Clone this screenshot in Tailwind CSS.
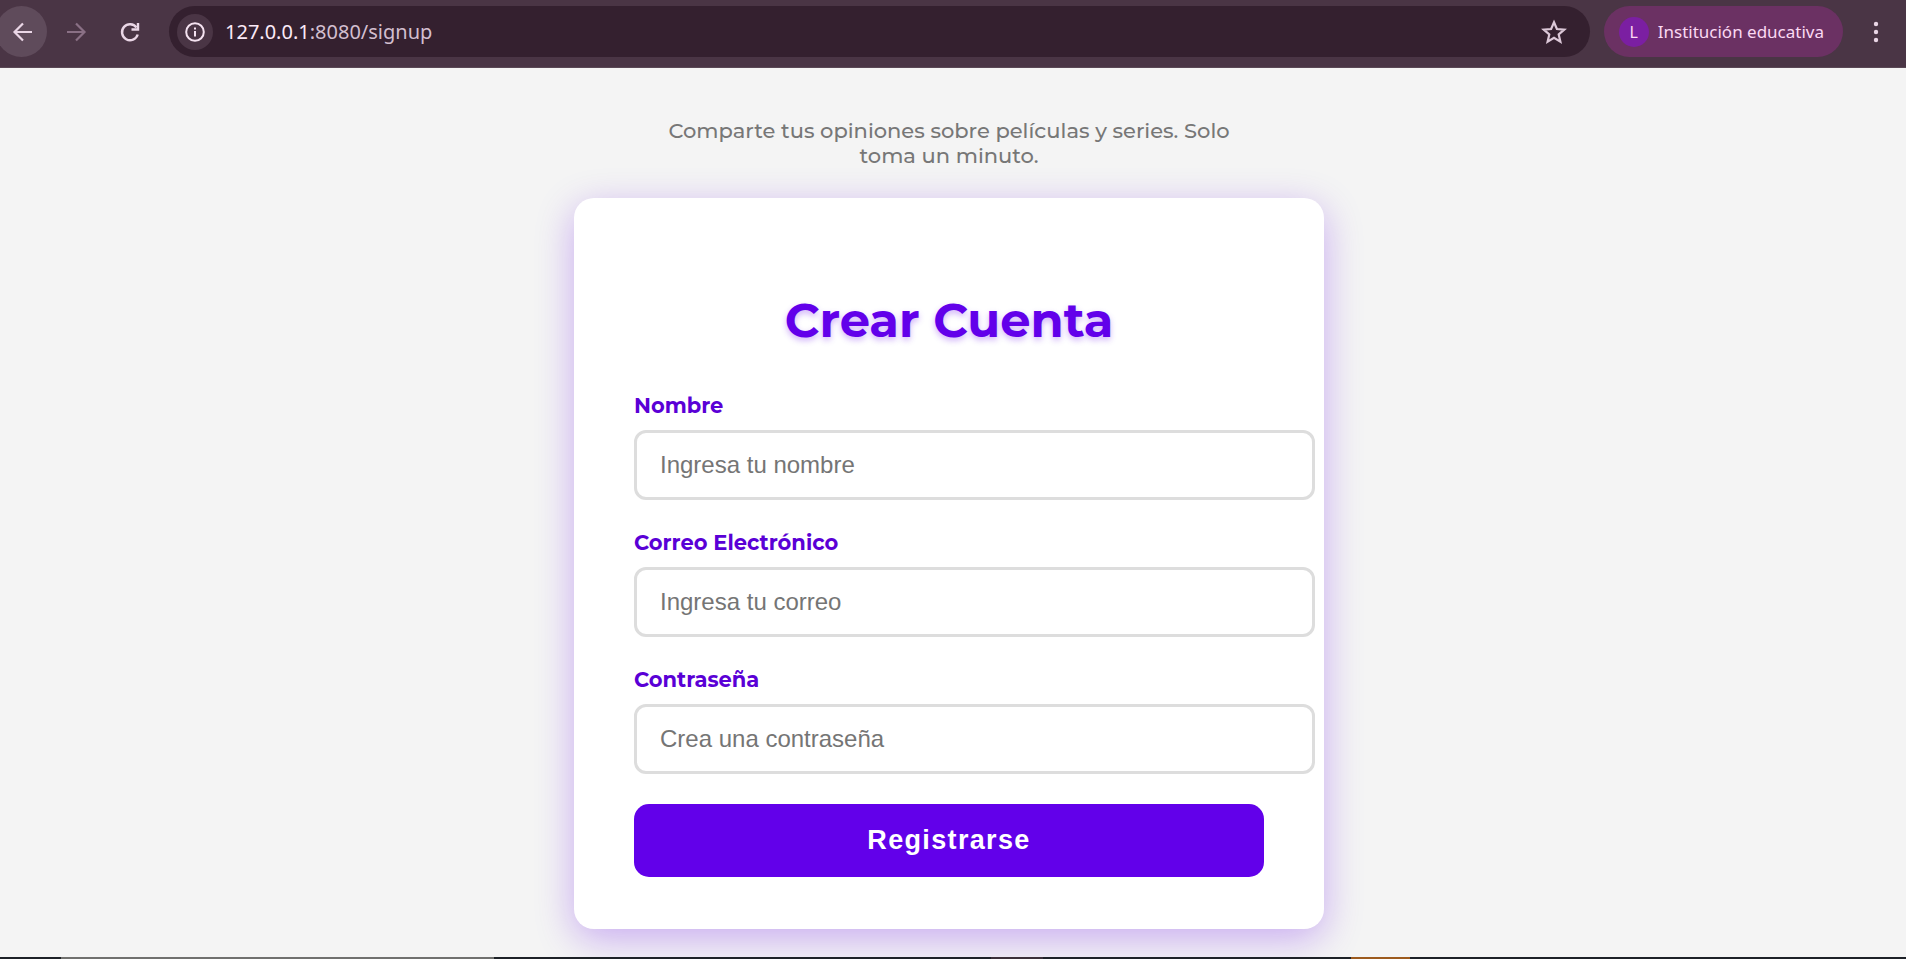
<!DOCTYPE html>
<html lang="es">
<head>
<meta charset="utf-8">
<meta name="viewport" content="width=device-width, initial-scale=1">
<title>Crear Cuenta</title>
<script src="https://cdn.jsdelivr.net/npm/@tailwindcss/browser@4"></script>
</head>
<body class="flex min-h-screen flex-col bg-[#f4f4f4] font-['Montserrat','Inter',sans-serif]">

<!-- Browser toolbar -->
<header class="flex h-[68px] shrink-0 items-start border-b border-[#5a4855] bg-[#4a3545] pt-[6px] pr-[16px] font-['Noto_Sans',sans-serif]">
  <nav class="flex shrink-0 items-center" aria-label="Navegación">
    <button type="button" aria-label="Atrás" class="-ml-1 flex size-[51px] items-center justify-center rounded-full bg-[#5f4b5b] pl-[3px] text-[#ead6e6]">
      <svg class="size-7" viewBox="0 0 28 28" fill="none" stroke="currentColor" stroke-width="2.2"><path d="M23 14H6M14 5.5 5.5 14l8.5 8.500"/></svg>
    </button>
    <button type="button" aria-label="Adelante" class="ml-[15px] flex h-[51px] w-7 items-center justify-center text-[#8a7085]">
      <svg class="size-7" viewBox="0 0 28 28" fill="none" stroke="currentColor" stroke-width="2.2"><path d="M5 14h17M14 5.500l8.500 8.500-8.500 8.500"/></svg>
    </button>
    <button type="button" aria-label="Recargar" class="ml-[26px] flex h-[51px] w-7 items-center justify-center text-[#ead6e6]">
      <svg class="size-7" viewBox="0 0 28 28" fill="none" stroke="currentColor" stroke-width="2.400"><path d="M21.700 16.500A8 8 0 1 1 20.500 9.500"/><path d="M22 5v6.500H15.500"/></svg>
    </button>
  </nav>
  <div class="ml-[25px] flex h-[51px] min-w-0 flex-1 items-center rounded-full bg-[#34202f] pr-[22px] pl-[8px]">
    <button type="button" aria-label="Información del sitio" class="flex size-9 shrink-0 items-center justify-center rounded-full bg-[#4a3545] text-[#f5e3f1]">
      <svg class="size-5" viewBox="0 0 20 20" fill="none" stroke="currentColor" stroke-width="2"><circle cx="10" cy="10" r="8.800"/><path d="M10 9v5.500M10 5.500v2"/></svg>
    </button>
    <p class="ml-3 min-w-0 flex-1 truncate text-[20px] leading-7 text-[#d3bfcf]"><span class="text-[#fbeaf7]">127.0.0.1</span>:8080/signup</p>
    <button type="button" aria-label="Añadir a marcadores" class="flex size-7 shrink-0 items-center justify-center text-[#dcc8d8]">
      <svg class="size-7" viewBox="0 0 28 28" fill="none" stroke="currentColor" stroke-width="2.200"><path d="M14 4.200l2.900 6.800 7.400.6-5.600 4.900 1.700 7.200L14 19.900l-6.400 3.800 1.700-7.200-5.600-4.900 7.400-.6z"/></svg>
    </button>
  </div>
  <button type="button" class="ml-[14px] flex h-[51px] shrink-0 items-center rounded-full bg-[#6b3163] pr-[19px] pl-[15px] text-[17px] text-[#fbd9f3]">
    <span class="mr-[9px] flex size-[30px] items-center justify-center rounded-full bg-[#7b1fa2] text-[16px]">L</span>Institución educativa
  </button>
  <button type="button" aria-label="Menú" class="ml-[19px] flex h-[51px] w-7 shrink-0 items-center justify-center text-[#ead6e6]">
    <svg class="size-6" viewBox="0 0 24 24" fill="currentColor"><circle cx="12" cy="4" r="2.200"/><circle cx="12" cy="12" r="2.200"/><circle cx="12" cy="20" r="2.200"/></svg>
  </button>
</header>

<!-- Sign-up page -->
<main class="flex flex-1 flex-col items-center pt-[50px] pr-2 pb-[28px]">
  <p class="mb-[30px] max-w-[600px] text-center text-[21px] leading-[25px] font-medium text-[#777777]">Comparte tus opiniones sobre películas y series. Solo toma un minuto.</p>
  <form class="w-full max-w-[750px] rounded-[20px] bg-white px-[60px] pt-[92px] pb-[52px] shadow-[0_10px_38px_rgba(98,0,234,0.3)]">
    <h1 class="mb-[43px] text-center text-[48px] leading-[60px] font-bold text-[#6200ea] text-shadow-[0_3px_6px_rgba(98,0,234,0.3)]">Crear Cuenta</h1>
    <div class="mb-[30px] flex flex-col gap-[11px]">
      <label for="nombre" class="text-[21px] leading-[26px] font-bold text-[#5a00d6]">Nombre</label>
      <input id="nombre" type="text" placeholder="Ingresa tu nombre" class="-mr-[51px] h-[70px] rounded-xl border-3 border-[#dddddd] bg-white px-[23px] font-['Liberation_Sans',sans-serif] text-[24px] placeholder:text-[#757575]">
    </div>
    <div class="mb-[30px] flex flex-col gap-[11px]">
      <label for="correo" class="text-[21px] leading-[26px] font-bold text-[#5a00d6]">Correo Electrónico</label>
      <input id="correo" type="email" placeholder="Ingresa tu correo" class="-mr-[51px] h-[70px] rounded-xl border-3 border-[#dddddd] bg-white px-[23px] font-['Liberation_Sans',sans-serif] text-[24px] placeholder:text-[#757575]">
    </div>
    <div class="mb-[30px] flex flex-col gap-[11px]">
      <label for="clave" class="text-[21px] leading-[26px] font-bold text-[#5a00d6]">Contraseña</label>
      <input id="clave" type="password" placeholder="Crea una contraseña" class="-mr-[51px] h-[70px] rounded-xl border-3 border-[#dddddd] bg-white px-[23px] font-['Liberation_Sans',sans-serif] text-[24px] placeholder:text-[#757575]">
    </div>
    <button type="submit" class="h-[73px] w-full rounded-[15px] bg-[#6200ea] font-['Liberation_Sans',sans-serif] text-[27px] font-bold tracking-wider text-white">Registrarse</button>
  </form>
</main>

<!-- Top edge of the desktop taskbar -->
<footer class="flex h-[2px] shrink-0 bg-[#1d2127]">
  <div class="w-[3.2%]"></div>
  <div class="w-[22.7%] bg-[#70706e]"></div>
  <div class="w-[26.1%]"></div>
  <div class="w-[2.7%] bg-[#3b3039]"></div>
  <div class="w-[16.2%]"></div>
  <div class="w-[3.1%] bg-[#9c5a1e]"></div>
</footer>
</body>
</html>
